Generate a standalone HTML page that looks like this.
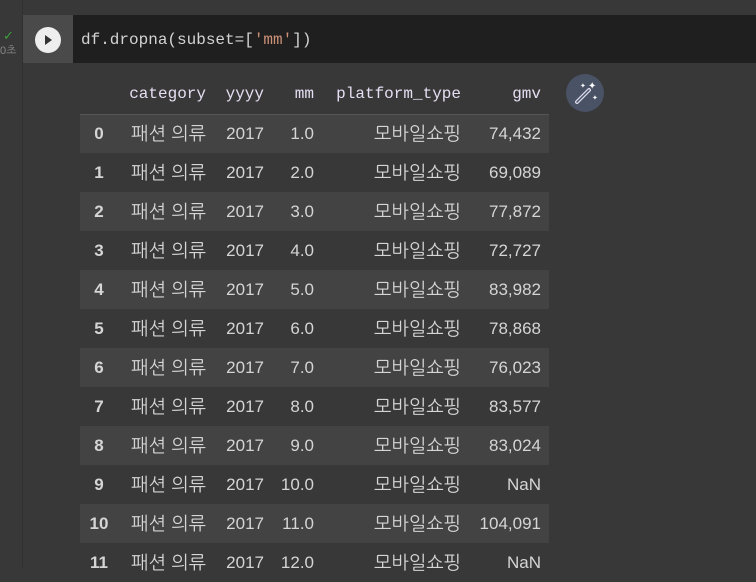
<html><head><style>
body{margin:0;width:756px;height:568px;background:#383838;overflow:hidden;position:relative;font-family:"Liberation Sans","NanumGothic",sans-serif;color:#d5d5d5}
.gut{position:absolute;left:0;top:0;width:22px;height:568px;background:#383838;border-right:1px solid #303030}
.run{position:absolute;left:23px;top:15px;width:50px;height:48px;background:#4a4a4a}
.btn{position:absolute;left:35px;top:27px;width:26px;height:26px;border-radius:50%;background:#eee}
.btn:after{content:"";position:absolute;left:10px;top:8px;border-left:7px solid #333;border-top:5px solid transparent;border-bottom:5px solid transparent}
.code{position:absolute;left:73px;top:15px;right:0;height:48px;background:#1f1f1f;font-family:"Liberation Mono",monospace;font-size:16px;line-height:50px;padding-left:8px;color:#d4d4d4}
.s{color:#ce9178}
table{position:absolute;left:80px;top:75px;border-collapse:collapse;font-size:17px;table-layout:fixed;width:469px}
th{font-family:"Liberation Mono",monospace;font-weight:normal;color:#e6def2;height:39px;text-align:right;padding:0 8px;font-size:16px}
td{height:39px;padding:0 8px;text-align:right;white-space:nowrap;overflow:visible}
td.k{font-size:18.5px}
td.i{font-weight:bold;text-align:center;padding:0}
tbody tr:nth-child(odd){background:#434343}
tbody tr:first-child td{border-top:1px solid #555}
.wand{position:absolute;left:566px;top:74px;width:38px;height:38px;border-radius:50%;background:#4a5266}
.chk{position:absolute;left:3px;top:28px;color:#3ca03c;font-size:13px}
.sec{position:absolute;left:0;top:44px;font-size:11px;color:#888}
</style></head><body>
<div class="gut"></div><div class="chk">✓</div><div class="sec">0초</div>
<div class="run"></div><div class="btn"></div>
<div class="code">df.dropna(subset=[<span class="s">'mm'</span>])</div>
<div class="wand"><svg width="38" height="38"><path d="M11 28 L23 16" stroke="#dde" stroke-width="4" stroke-linecap="round"/><path d="M11 28 L23 16" stroke="#4a5266" stroke-width="1.5" stroke-linecap="round"/><text x="22" y="15" fill="#fff" font-size="10">✦</text><text x="26" y="26" fill="#fff" font-size="7">✦</text><text x="14" y="14" fill="#fff" font-size="7">✦</text></svg></div>
<table>
<colgroup><col style="width:38px"><col style="width:96px"><col style="width:58px"><col style="width:50px"><col style="width:147px"><col style="width:80px"></colgroup>
<thead><tr><th></th><th>category</th><th>yyyy</th><th>mm</th><th>platform_type</th><th>gmv</th></tr></thead>
<tbody>
<tr><td class="i">0</td><td class="k">패션 의류</td><td>2017</td><td>1.0</td><td class="k">모바일쇼핑</td><td>74,432</td></tr>
<tr><td class="i">1</td><td class="k">패션 의류</td><td>2017</td><td>2.0</td><td class="k">모바일쇼핑</td><td>69,089</td></tr>
<tr><td class="i">2</td><td class="k">패션 의류</td><td>2017</td><td>3.0</td><td class="k">모바일쇼핑</td><td>77,872</td></tr>
<tr><td class="i">3</td><td class="k">패션 의류</td><td>2017</td><td>4.0</td><td class="k">모바일쇼핑</td><td>72,727</td></tr>
<tr><td class="i">4</td><td class="k">패션 의류</td><td>2017</td><td>5.0</td><td class="k">모바일쇼핑</td><td>83,982</td></tr>
<tr><td class="i">5</td><td class="k">패션 의류</td><td>2017</td><td>6.0</td><td class="k">모바일쇼핑</td><td>78,868</td></tr>
<tr><td class="i">6</td><td class="k">패션 의류</td><td>2017</td><td>7.0</td><td class="k">모바일쇼핑</td><td>76,023</td></tr>
<tr><td class="i">7</td><td class="k">패션 의류</td><td>2017</td><td>8.0</td><td class="k">모바일쇼핑</td><td>83,577</td></tr>
<tr><td class="i">8</td><td class="k">패션 의류</td><td>2017</td><td>9.0</td><td class="k">모바일쇼핑</td><td>83,024</td></tr>
<tr><td class="i">9</td><td class="k">패션 의류</td><td>2017</td><td>10.0</td><td class="k">모바일쇼핑</td><td>NaN</td></tr>
<tr><td class="i">10</td><td class="k">패션 의류</td><td>2017</td><td>11.0</td><td class="k">모바일쇼핑</td><td>104,091</td></tr>
<tr><td class="i">11</td><td class="k">패션 의류</td><td>2017</td><td>12.0</td><td class="k">모바일쇼핑</td><td>NaN</td></tr>
</tbody></table>
</body></html>
